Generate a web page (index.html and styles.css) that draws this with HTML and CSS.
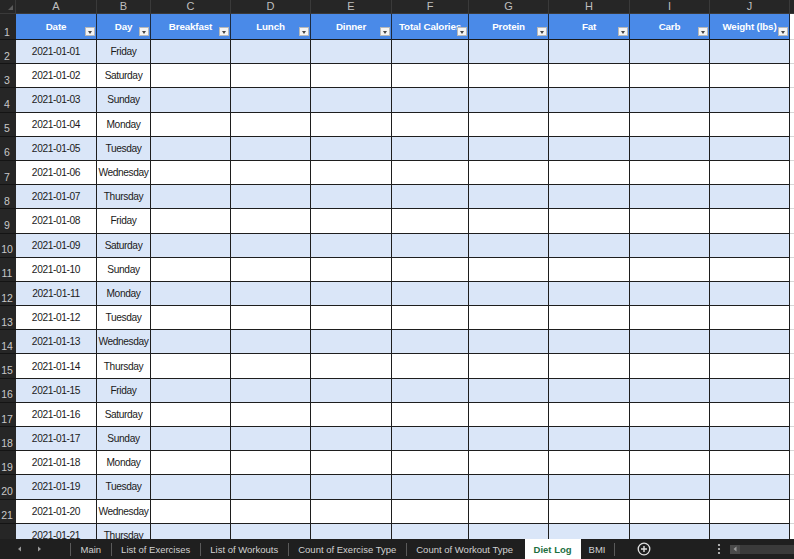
FILE: index.html
```html
<!DOCTYPE html>
<html>
<head>
<meta charset="utf-8">
<link rel="stylesheet" href="styles.css">
</head>
<body>
<div class="app">
  <div class="sheet">
    <div class="row top">
      <div class="cn"><span class="tri"></span></div>
      <div class="ch">A</div><div class="ch">B</div><div class="ch">C</div><div class="ch">D</div><div class="ch">E</div>
      <div class="ch">F</div><div class="ch">G</div><div class="ch">H</div><div class="ch">I</div><div class="ch">J</div><div class="ch last"></div>
    </div>
    <div class="row head">
      <div class="rn">1</div>
      <div class="h">Date<span class="fb"></span></div>
      <div class="h">Day<span class="fb"></span></div>
      <div class="h">Breakfast<span class="fb"></span></div>
      <div class="h">Lunch<span class="fb"></span></div>
      <div class="h">Dinner<span class="fb"></span></div>
      <div class="h">Total Calories<span class="fb"></span></div>
      <div class="h">Protein<span class="fb"></span></div>
      <div class="h">Fat<span class="fb"></span></div>
      <div class="h">Carb<span class="fb"></span></div>
      <div class="h">Weight (lbs)<span class="fb"></span></div>
      <div class="x"></div>
    </div>
    <div class="row alt"><div class="rn">2</div><div class="c">2021-01-01</div><div class="c">Friday</div><div class="c"></div><div class="c"></div><div class="c"></div><div class="c"></div><div class="c"></div><div class="c"></div><div class="c"></div><div class="c"></div><div class="x"></div></div>
    <div class="row"><div class="rn">3</div><div class="c">2021-01-02</div><div class="c">Saturday</div><div class="c"></div><div class="c"></div><div class="c"></div><div class="c"></div><div class="c"></div><div class="c"></div><div class="c"></div><div class="c"></div><div class="x"></div></div>
    <div class="row alt"><div class="rn">4</div><div class="c">2021-01-03</div><div class="c">Sunday</div><div class="c"></div><div class="c"></div><div class="c"></div><div class="c"></div><div class="c"></div><div class="c"></div><div class="c"></div><div class="c"></div><div class="x"></div></div>
    <div class="row"><div class="rn">5</div><div class="c">2021-01-04</div><div class="c">Monday</div><div class="c"></div><div class="c"></div><div class="c"></div><div class="c"></div><div class="c"></div><div class="c"></div><div class="c"></div><div class="c"></div><div class="x"></div></div>
    <div class="row alt"><div class="rn">6</div><div class="c">2021-01-05</div><div class="c">Tuesday</div><div class="c"></div><div class="c"></div><div class="c"></div><div class="c"></div><div class="c"></div><div class="c"></div><div class="c"></div><div class="c"></div><div class="x"></div></div>
    <div class="row"><div class="rn">7</div><div class="c">2021-01-06</div><div class="c">Wednesday</div><div class="c"></div><div class="c"></div><div class="c"></div><div class="c"></div><div class="c"></div><div class="c"></div><div class="c"></div><div class="c"></div><div class="x"></div></div>
    <div class="row alt"><div class="rn">8</div><div class="c">2021-01-07</div><div class="c">Thursday</div><div class="c"></div><div class="c"></div><div class="c"></div><div class="c"></div><div class="c"></div><div class="c"></div><div class="c"></div><div class="c"></div><div class="x"></div></div>
    <div class="row"><div class="rn">9</div><div class="c">2021-01-08</div><div class="c">Friday</div><div class="c"></div><div class="c"></div><div class="c"></div><div class="c"></div><div class="c"></div><div class="c"></div><div class="c"></div><div class="c"></div><div class="x"></div></div>
    <div class="row alt"><div class="rn">10</div><div class="c">2021-01-09</div><div class="c">Saturday</div><div class="c"></div><div class="c"></div><div class="c"></div><div class="c"></div><div class="c"></div><div class="c"></div><div class="c"></div><div class="c"></div><div class="x"></div></div>
    <div class="row"><div class="rn">11</div><div class="c">2021-01-10</div><div class="c">Sunday</div><div class="c"></div><div class="c"></div><div class="c"></div><div class="c"></div><div class="c"></div><div class="c"></div><div class="c"></div><div class="c"></div><div class="x"></div></div>
    <div class="row alt"><div class="rn">12</div><div class="c">2021-01-11</div><div class="c">Monday</div><div class="c"></div><div class="c"></div><div class="c"></div><div class="c"></div><div class="c"></div><div class="c"></div><div class="c"></div><div class="c"></div><div class="x"></div></div>
    <div class="row"><div class="rn">13</div><div class="c">2021-01-12</div><div class="c">Tuesday</div><div class="c"></div><div class="c"></div><div class="c"></div><div class="c"></div><div class="c"></div><div class="c"></div><div class="c"></div><div class="c"></div><div class="x"></div></div>
    <div class="row alt"><div class="rn">14</div><div class="c">2021-01-13</div><div class="c">Wednesday</div><div class="c"></div><div class="c"></div><div class="c"></div><div class="c"></div><div class="c"></div><div class="c"></div><div class="c"></div><div class="c"></div><div class="x"></div></div>
    <div class="row"><div class="rn">15</div><div class="c">2021-01-14</div><div class="c">Thursday</div><div class="c"></div><div class="c"></div><div class="c"></div><div class="c"></div><div class="c"></div><div class="c"></div><div class="c"></div><div class="c"></div><div class="x"></div></div>
    <div class="row alt"><div class="rn">16</div><div class="c">2021-01-15</div><div class="c">Friday</div><div class="c"></div><div class="c"></div><div class="c"></div><div class="c"></div><div class="c"></div><div class="c"></div><div class="c"></div><div class="c"></div><div class="x"></div></div>
    <div class="row"><div class="rn">17</div><div class="c">2021-01-16</div><div class="c">Saturday</div><div class="c"></div><div class="c"></div><div class="c"></div><div class="c"></div><div class="c"></div><div class="c"></div><div class="c"></div><div class="c"></div><div class="x"></div></div>
    <div class="row alt"><div class="rn">18</div><div class="c">2021-01-17</div><div class="c">Sunday</div><div class="c"></div><div class="c"></div><div class="c"></div><div class="c"></div><div class="c"></div><div class="c"></div><div class="c"></div><div class="c"></div><div class="x"></div></div>
    <div class="row"><div class="rn">19</div><div class="c">2021-01-18</div><div class="c">Monday</div><div class="c"></div><div class="c"></div><div class="c"></div><div class="c"></div><div class="c"></div><div class="c"></div><div class="c"></div><div class="c"></div><div class="x"></div></div>
    <div class="row alt"><div class="rn">20</div><div class="c">2021-01-19</div><div class="c">Tuesday</div><div class="c"></div><div class="c"></div><div class="c"></div><div class="c"></div><div class="c"></div><div class="c"></div><div class="c"></div><div class="c"></div><div class="x"></div></div>
    <div class="row"><div class="rn">21</div><div class="c">2021-01-20</div><div class="c">Wednesday</div><div class="c"></div><div class="c"></div><div class="c"></div><div class="c"></div><div class="c"></div><div class="c"></div><div class="c"></div><div class="c"></div><div class="x"></div></div>
    <div class="row alt"><div class="rn"></div><div class="c">2021-01-21</div><div class="c">Thursday</div><div class="c"></div><div class="c"></div><div class="c"></div><div class="c"></div><div class="c"></div><div class="c"></div><div class="c"></div><div class="c"></div><div class="x"></div></div>
  </div>
  <div class="tabs">
    <div class="nav">
      <svg width="6" height="6" viewBox="0 0 6 6"><path d="M4 0.5 L1 3 L4 5.5 Z" fill="#9a9a9a"/></svg>
      <svg width="6" height="6" viewBox="0 0 6 6"><path d="M2 0.5 L5 3 L2 5.5 Z" fill="#9a9a9a"/></svg>
    </div>
    <i class="sep"></i>
    <div class="tab">Main</div>
    <i class="sep"></i>
    <div class="tab">List of Exercises</div>
    <i class="sep"></i>
    <div class="tab">List of Workouts</div>
    <i class="sep"></i>
    <div class="tab">Count of Exercise Type</div>
    <i class="sep"></i>
    <div class="tab">Count of Workout Type</div>
    <div class="tab active">Diet Log</div>
    <div class="tab bmi">BMI</div>
    <i class="sep"></i>
    <div class="add">
      <svg width="14" height="14" viewBox="0 0 14 14"><circle cx="7" cy="7" r="5.8" fill="none" stroke="#e0e0e0" stroke-width="1.3"/><path d="M7 4v6M4 7h6" stroke="#e0e0e0" stroke-width="1.4"/></svg>
    </div>
    <div class="more">
      <svg width="4" height="12" viewBox="0 0 4 12"><circle cx="2" cy="2" r="1.1" fill="#d0d0d0"/><circle cx="2" cy="6" r="1.1" fill="#d0d0d0"/><circle cx="2" cy="10" r="1.1" fill="#d0d0d0"/></svg>
    </div>
    <div class="hscroll">
      <div class="sbtn"><svg width="4" height="6" viewBox="0 0 4 6"><path d="M3.5 0.5 L0.5 3 L3.5 5.5 Z" fill="#9a9a9a"/></svg></div>
      <div class="track"></div>
    </div>
  </div>
</div>
</body>
</html>
```
FILE: styles.css
```css
* { box-sizing: border-box; margin: 0; padding: 0; }
html, body { width: 794px; height: 559px; overflow: hidden; background: #1f1f1f; }
body { font-family: "Liberation Sans", Arial, sans-serif; }

.app { display: flex; flex-direction: column; width: 794px; height: 559px; }

.sheet {
  height: 539px;
  overflow: hidden;
  display: grid;
  grid-template-columns: 16px 81px 54px 80px 80px 81px 77px 80px 81px 80px 80px 4px;
  grid-template-rows: 14px 26px repeat(21, 24.2px);
  background: #ffffff;
}
.row { display: contents; }

.cn {
  background: #262626;
  border-right: 1px solid #3a3a3a;
  border-bottom: 1px solid #3a3a3a;
  position: relative;
}
.tri {
  position: absolute; right: 2px; bottom: 3px;
  width: 0; height: 0;
  border-left: 5px solid transparent;
  border-bottom: 5px solid #5c5c5c;
}
.ch {
  background: #262626;
  color: #bfbfbf;
  font-size: 11px;
  display: flex; align-items: center; justify-content: center;
  border-right: 1px solid #3a3a3a;
  border-bottom: 1px solid #3a3a3a;
  line-height: 1;
}
.ch.last { border-right: none; }

.rn {
  background: #262626;
  color: #c8c8c8;
  font-size: 10.5px;
  display: flex; align-items: flex-end; justify-content: center;
  padding: 0 2px 2px 0;
  border-bottom: 1px solid #141414;
  line-height: 1;
}

.h {
  position: relative;
  background: #4a8ae8;
  color: #ffffff;
  font-weight: bold;
  font-size: 9.8px;
  letter-spacing: -0.15px;
  display: flex; align-items: center; justify-content: center;
  white-space: nowrap;
  overflow: hidden;
  border-right: 1px solid #1c2a3e;
  border-bottom: 1px solid #1a1a1a;
}
.fb {
  position: absolute; right: 1px; bottom: 3px;
  width: 10px; height: 9px;
  background: #f4f4f4;
  border: 1px solid #b8b8b8;
}
.fb::after {
  content: "";
  position: absolute; left: 2px; top: 3px;
  border-left: 2.5px solid transparent;
  border-right: 2.5px solid transparent;
  border-top: 3px solid #444;
}

.c {
  background: #ffffff;
  color: #1a1a1a;
  font-size: 10.2px;
  letter-spacing: -0.38px;
  display: flex; align-items: center; justify-content: center;
  white-space: nowrap;
  border-right: 1px solid #1e1e1e;
  border-bottom: 1px solid #1e1e1e;
}
.row.alt .c { background: #dae6f8; }
.x { background: #ffffff; border-bottom: 1px solid #d6d6d6; }

.tabs {
  height: 20px;
  background: #1f1f1f;
  display: flex; align-items: center;
  color: #d2d2d2;
  font-family: "Liberation Sans", Arial, sans-serif;
  font-size: 9.5px;
  white-space: nowrap;
}
.nav { width: 70px; display: flex; align-items: center; gap: 13px; padding-left: 17px; }
.sep { display: block; width: 1px; height: 13px; background: #5a5a5a; }
.tab { padding: 0 9.5px; height: 20px; display: flex; align-items: center; }
.tab.active {
  background: #ffffff;
  color: #1d6f3f;
  font-weight: bold;
  padding: 0 9px;
  margin-left: 2px;
}
.tab.bmi { padding: 0 9px 0 8px; }
.add { margin-left: 22px; display: flex; align-items: center; }
.more { margin-left: 66px; display: flex; align-items: center; }
.hscroll { margin-left: 9px; flex: 1; height: 9px; display: flex; }
.sbtn { width: 10px; height: 9px; background: #4a4a4a; display: flex; align-items: center; justify-content: center; }
.track { flex: 1; background: #3a3a3a; }
```
